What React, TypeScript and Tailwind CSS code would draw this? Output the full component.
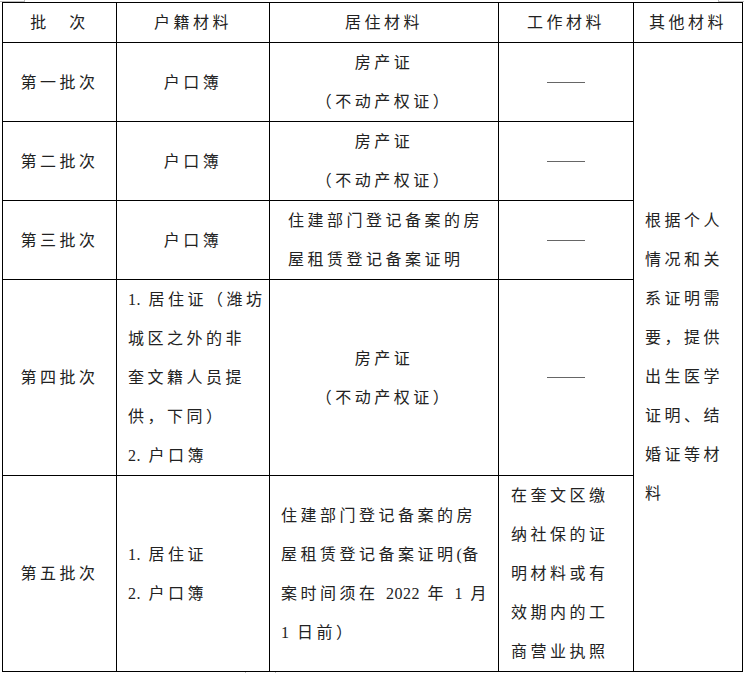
import React from 'react';

const cell = 'border border-black p-0 align-middle';

// Latin runs (digits, dots, half-width brackets) keep normal spacing
const renderLine = (l: string) =>
  l.split(/([0-9.(]+)/).map((part, i) =>
    /^[0-9.(]+$/.test(part) ? (
      <span key={i} className="tracking-[0.5px]">{part}</span>
    ) : (
      <React.Fragment key={i}>{part}</React.Fragment>
    )
  );

const Lines: React.FC<{ lines: string[]; className?: string }> = ({ lines, className }) => (
  <div className={className}>
    {lines.map((l, i) => (
      <div key={i} className="whitespace-pre">{renderLine(l)}</div>
    ))}
  </div>
);

const Dash = () => (
  <div className="flex justify-center">
    <div className="w-[38px] h-px bg-[#666]" />
  </div>
);

const App: React.FC = () => {
  return (
    <div
      className="relative w-[744px] h-[673px] bg-white text-[#222] text-[16px] leading-[39px] tracking-[3.5px] overflow-hidden"
      style={{ fontFamily: '"Liberation Serif", "Noto Sans CJK SC", serif' }}
    >
      {/* stray page-corner marks */}
      <div className="absolute left-0 top-0 w-[25px] h-[2px] border-b border-r border-[#bbb]" />
      <div className="absolute right-0 top-0 w-[26px] h-[2px] border-b border-l border-[#bbb]" />
      <div className="absolute left-[245px] top-[671px] w-[31px] h-[2px] border-l border-r border-[#bbb]" />

      <table className="absolute left-[2px] top-[2px] w-[740px] border-collapse table-fixed">
        <colgroup>
          <col className="w-[114px]" />
          <col className="w-[153px]" />
          <col className="w-[229px]" />
          <col className="w-[135px]" />
          <col className="w-[109px]" />
        </colgroup>
        <tbody>
          <tr className="h-[39px]">
            <td className={`${cell} text-center`}>批　次</td>
            <td className={`${cell} text-center`}>户籍材料</td>
            <td className={`${cell} text-center`}>居住材料</td>
            <td className={`${cell} text-center`}>工作材料</td>
            <td className={`${cell} text-center`}>其他材料</td>
          </tr>
          <tr className="h-[79px]">
            <td className={`${cell} text-center`}>第一批次</td>
            <td className={`${cell} text-center`}>户口簿</td>
            <td className={`${cell} text-center`}>
              <Lines lines={['房产证', '（不动产权证）']} />
            </td>
            <td className={cell}><Dash /></td>
            <td className={`${cell} pl-[11px]`} rowSpan={5}>
              <Lines
                lines={[
                  '根据个人',
                  '情况和关',
                  '系证明需',
                  '要，提供',
                  '出生医学',
                  '证明、结',
                  '婚证等材',
                  '料',
                ]}
              />
            </td>
          </tr>
          <tr className="h-[79px]">
            <td className={`${cell} text-center`}>第二批次</td>
            <td className={`${cell} text-center`}>户口簿</td>
            <td className={`${cell} text-center`}>
              <Lines lines={['房产证', '（不动产权证）']} />
            </td>
            <td className={cell}><Dash /></td>
          </tr>
          <tr className="h-[79px]">
            <td className={`${cell} text-center`}>第三批次</td>
            <td className={`${cell} text-center`}>户口簿</td>
            <td className={`${cell} pl-[18px]`}>
              <Lines lines={['住建部门登记备案的房', '屋租赁登记备案证明']} />
            </td>
            <td className={cell}><Dash /></td>
          </tr>
          <tr className="h-[196px]">
            <td className={`${cell} text-center`}>第四批次</td>
            <td className={`${cell} pl-[11px]`}>
              <Lines
                lines={['1. 居住证（潍坊', '城区之外的非', '奎文籍人员提', '供，下同）', '2. 户口簿']}
              />
            </td>
            <td className={`${cell} text-center`}>
              <Lines lines={['房产证', '（不动产权证）']} />
            </td>
            <td className={cell}><Dash /></td>
          </tr>
          <tr className="h-[196px]">
            <td className={`${cell} text-center`}>第五批次</td>
            <td className={`${cell} pl-[11px]`}>
              <Lines lines={['1. 居住证', '2. 户口簿']} />
            </td>
            <td className={`${cell} pl-[11px]`}>
              <Lines
                lines={['住建部门登记备案的房', '屋租赁登记备案证明(备', '案时间须在 2022 年 1 月', '1 日前）']}
              />
            </td>
            <td className={`${cell} pl-[12px]`}>
              <Lines lines={['在奎文区缴', '纳社保的证', '明材料或有', '效期内的工', '商营业执照']} />
            </td>
          </tr>
        </tbody>
      </table>
    </div>
  );
};

export default App;
